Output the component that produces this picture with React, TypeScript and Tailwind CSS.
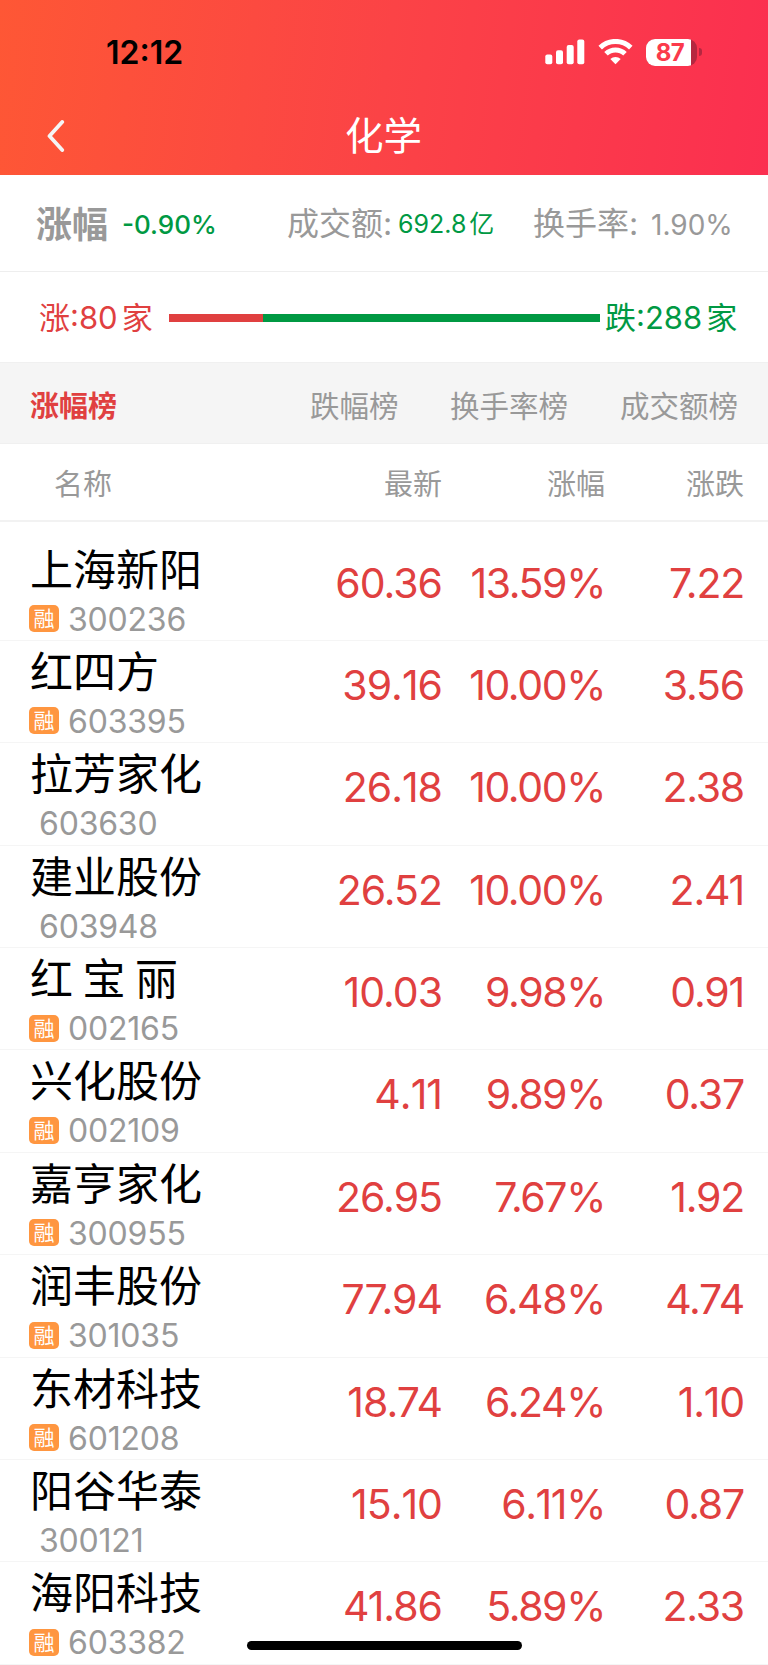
type Stock = {
  name: string
  code: string
  margin: boolean
  price: string
  percent: string
  change: string
}

const stocks: Stock[] = [
  { name: "上海新阳", code: "300236", margin: true, price: "60.36", percent: "13.59%", change: "7.22" },
  { name: "红四方", code: "603395", margin: true, price: "39.16", percent: "10.00%", change: "3.56" },
  { name: "拉芳家化", code: "603630", margin: false, price: "26.18", percent: "10.00%", change: "2.38" },
  { name: "建业股份", code: "603948", margin: false, price: "26.52", percent: "10.00%", change: "2.41" },
  { name: "红 宝 丽", code: "002165", margin: true, price: "10.03", percent: "9.98%", change: "0.91" },
  { name: "兴化股份", code: "002109", margin: true, price: "4.11", percent: "9.89%", change: "0.37" },
  { name: "嘉亨家化", code: "300955", margin: true, price: "26.95", percent: "7.67%", change: "1.92" },
  { name: "润丰股份", code: "301035", margin: true, price: "77.94", percent: "6.48%", change: "4.74" },
  { name: "东材科技", code: "601208", margin: true, price: "18.74", percent: "6.24%", change: "1.10" },
  { name: "阳谷华泰", code: "300121", margin: false, price: "15.10", percent: "6.11%", change: "0.87" },
  { name: "海阳科技", code: "603382", margin: true, price: "41.86", percent: "5.89%", change: "2.33" },
]

function StatusBar() {
  return (
    <div className="flex h-[102px] items-center justify-between pl-[106px] pr-[66px] pt-[2px]">
      <span className="pt-[2px] text-[32px] font-semibold leading-none text-black">12:12</span>
      <div className="flex items-center gap-[13px]">
        {/* Signal */}
        <svg width="40" height="26" viewBox="0 0 40 26" fill="#fff">
          <rect x="0.3" y="15.5" width="7" height="9.8" rx="2" />
          <rect x="11" y="11.3" width="7" height="14" rx="2" />
          <rect x="21.7" y="6" width="7" height="19.3" rx="2" />
          <rect x="32.3" y="0.6" width="7" height="24.7" rx="2" />
        </svg>
        {/* Wifi */}
        <svg width="35" height="26" viewBox="0 0 35 26" fill="none" stroke="#fff" strokeWidth="5">
          <path d="M2.2 8.6a22 22 0 0 1 30.6 0" />
          <path d="M8 14.8a13.6 13.6 0 0 1 19 0" />
          <path d="M12.3 20a7.5 7.5 0 0 1 10.4 0L17.5 25.3z" fill="#fff" stroke="none" />
        </svg>
        {/* Battery */}
        <div className="flex items-center gap-[2px]">
          <div className="flex h-[27px] w-[51px] overflow-hidden rounded-[9px] bg-[#b52740]">
            <span className="w-[45px] bg-white pl-[3px] text-center text-[24px] font-bold leading-[27px] tracking-[-0.5px] text-[#fb3a4b]">87</span>
          </div>
          <div className="h-[8px] w-[3px] rounded-r-full bg-[#b52740]" />
        </div>
      </div>
    </div>
  )
}

function Header() {
  return (
    <header className="h-[175px] bg-[linear-gradient(97deg,#fe5735_0%,#fb4346_50%,#fb2f50_100%)]">
      <StatusBar />
      <div className="flex h-[68px] items-center pl-[46px] pr-[67px]">
        <svg width="20" height="32" viewBox="0 0 20 32" fill="none" stroke="#f5f5f5" strokeWidth="3.8" strokeLinecap="round" strokeLinejoin="round">
          <path d="M16.2 2 3.5 16l12.7 14" />
        </svg>
        <h1 className="flex-1 text-center text-[38.5px] leading-none text-white">化学</h1>
      </div>
    </header>
  )
}

function Summary() {
  return (
    <section className="flex h-[97px] items-center border-b border-[#eeeeee] pl-9 text-[32px] leading-none text-[#999999]">
      <span className="w-[86px] pt-[3px] text-[36px] font-bold">涨幅</span>
      <span className="w-[165px] pt-[3px] text-[26px] font-medium text-[#009943]">-0.90%</span>
      <span className="w-[111px] pt-px">成交额:</span>
      <span className="flex w-[135px] gap-[3px] pt-[3px] text-[25px] text-[#009943]">
        <span>692.8</span>
        <span>亿</span>
      </span>
      <span className="w-[118px] pt-px">换手率:</span>
      <span className="pt-[3px] text-[28px]">1.90%</span>
    </section>
  )
}

function RiseFallBar() {
  return (
    <section className="flex h-[90px] items-center pl-[39px] pt-px text-[31px] leading-none">
      <span className="flex w-[130px] gap-[4px] text-[#e04040]">
        <span>涨:80</span>
        <span>家</span>
      </span>
      <div className="flex h-2 w-[431px]">
        <div className="w-[94px] bg-[#e04040]" />
        <div className="flex-1 bg-[#009943]" />
      </div>
      <span className="ml-[5px] flex gap-[4px] text-[#009943]">
        <span>跌:288</span>
        <span>家</span>
      </span>
    </section>
  )
}

function Tabs() {
  return (
    <nav className="flex h-[82px] items-center border-y border-[#f0f0f0] bg-[#f5f5f5] pl-[30px] pt-[7px] text-[29.5px] leading-none text-[#999999]">
      <span className="w-[280px] text-[29px] font-bold text-[#e04040]">涨幅榜</span>
      <span className="w-[140px]">跌幅榜</span>
      <span className="w-[170px]">换手率榜</span>
      <span>成交额榜</span>
    </nav>
  )
}

function Figure({ value, className }: { value: string; className: string }) {
  // ".1" pairs are kerned too tightly
  const loose = value.includes(".1")
  return <span className={`${className} ${loose ? "[font-kerning:none]" : ""}`}>{value}</span>
}

function StockRow({ stock }: { stock: Stock }) {
  return (
    <li className="flex h-[102.4px] border-b border-[#f5f5f5] pl-[29px] pr-6 leading-none">
      <div className="w-[213px] pt-[10px]">
        <div className="whitespace-nowrap pl-px text-[43px] text-black [word-spacing:-2.6px]">{stock.name}</div>
        <div className={stock.margin ? "flex items-center pt-[5px]" : "flex items-center pl-[10px] pt-[5px]"}>
          {stock.margin && (
            <span className="mr-[9px] h-[27px] w-[30px] rounded-[5px] bg-[#ff9640] text-center text-[21px] leading-[27px] text-white">融</span>
          )}
          <span className="pt-[2px] text-[32px] leading-[42px] tracking-[-0.2px] text-[#999999] [font-kerning:none]">{stock.code}</span>
        </div>
      </div>
      <div className="flex flex-1 pt-[24px] text-right text-[41px] tracking-[-1px] text-[#e04040]">
        <Figure value={stock.price} className="w-[201px]" />
        <Figure value={stock.percent} className="w-[163px] tracking-[-1.4px]" />
        <Figure value={stock.change} className="w-[139px] tracking-[-1.2px]" />
      </div>
    </li>
  )
}

function App() {
  return (
    <div className="relative h-[1665px] w-[768px] overflow-hidden bg-white font-['Inter','Noto_Sans_CJK_SC',sans-serif]">
      <Header />
      <Summary />
      <RiseFallBar />
      <Tabs />

      {/* Column titles */}
      <div className="flex h-[78px] items-center border-b-2 border-[#f2f2f2] pl-[54px] pt-[4px] text-[29px] leading-none text-[#999999]">
        <span className="w-[188px]">名称</span>
        <span className="w-[200px] text-right">最新</span>
        <span className="w-[163px] text-right">涨幅</span>
        <span className="w-[139px] text-right">涨跌</span>
      </div>

      <ul className="pt-[16.5px]">
        {stocks.map((stock) => (
          <StockRow key={stock.code} stock={stock} />
        ))}
      </ul>

      {/* Home indicator */}
      <div className="absolute bottom-[15px] left-[246.5px] h-[9px] w-[275px] rounded-full bg-black" />
    </div>
  )
}

export default App
